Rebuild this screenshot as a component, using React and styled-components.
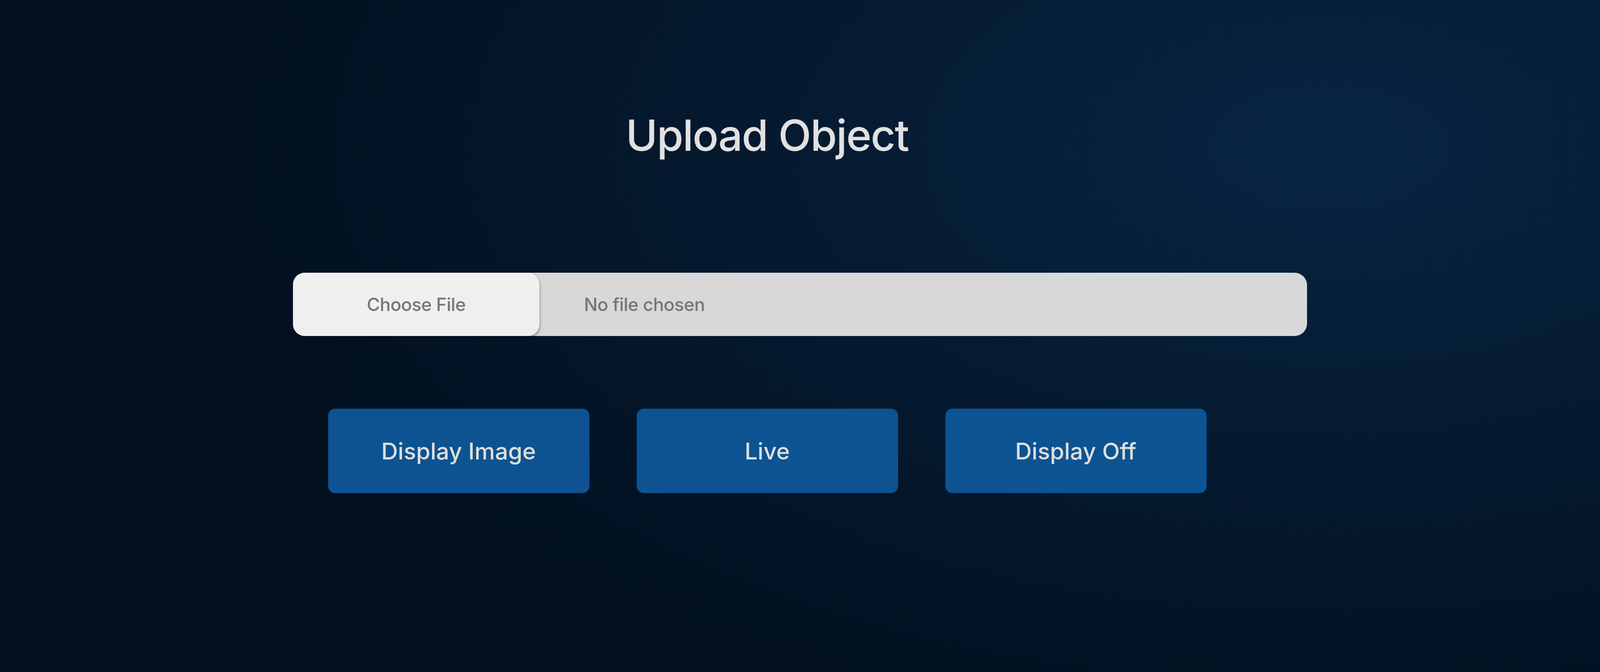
import React from "react";
import styled, { createGlobalStyle } from "styled-components";

const GlobalStyle = createGlobalStyle`
  html, body {
    margin: 0;
    padding: 0;
  }
  body {
    font-family: Inter, "Noto Sans", sans-serif;
    background: #03111f;
  }
`;

const App = () => {
  return (
    <>
      <GlobalStyle />
      <Page>
        <Content>
          <Title>Upload Object</Title>
          <FilePicker>
            <ChooseButton>Choose File</ChooseButton>
            <FileName>No file chosen</FileName>
          </FilePicker>
          <ButtonRow>
            <ActionButton>Display Image</ActionButton>
            <ActionButton>Live</ActionButton>
            <ActionButton>Display Off</ActionButton>
          </ButtonRow>
        </Content>
      </Page>
    </>
  );
};

export default App;

const Page = styled.div`
  width: 100%;
  height: 1720px;
  display: flex;
  justify-content: center;
  background: radial-gradient(
    ellipse 70% 90% at 83% 22%,
    #072543 0%,
    #061d36 35%,
    #041629 70%,
    #021020 100%
  );
  overflow: hidden;
`;

const Content = styled.div`
  width: 2596px;
  display: flex;
  flex-direction: column;
  padding-top: 290px;
`;

const Title = styled.h1`
  margin: 0 168px 0 0;
  text-align: center;
  font-size: 110px;
  line-height: 112px;
  font-weight: 500;
  letter-spacing: -2px;
  color: #e1e1e1;
`;

const FilePicker = styled.div`
  margin-top: 296px;
  height: 162px;
  display: flex;
  align-items: center;
  background: #d8d8d8;
  border-radius: 32px;
`;

const ChooseButton = styled.div`
  width: 631px;
  height: 100%;
  display: flex;
  align-items: center;
  justify-content: center;
  background: #efefef;
  border-radius: 30px;
  box-shadow: 2px 4px 6px rgba(0, 0, 0, 0.28);
  font-size: 46px;
  font-weight: 500;
  letter-spacing: -0.5px;
  color: #767676;
`;

const FileName = styled.div`
  margin-left: 114px;
  font-size: 46px;
  font-weight: 500;
  letter-spacing: -0.5px;
  color: #767676;
`;

const ButtonRow = styled.div`
  margin: 186px 168px 0 0;
  display: flex;
  justify-content: center;
  gap: 121px;
`;

const ActionButton = styled.button`
  width: 669px;
  height: 216px;
  border: none;
  border-radius: 18px;
  background: #0d5392;
  color: #dedede;
  font-family: Inter, "Noto Sans", sans-serif;
  font-size: 59px;
  font-weight: 500;
  cursor: pointer;
`;
